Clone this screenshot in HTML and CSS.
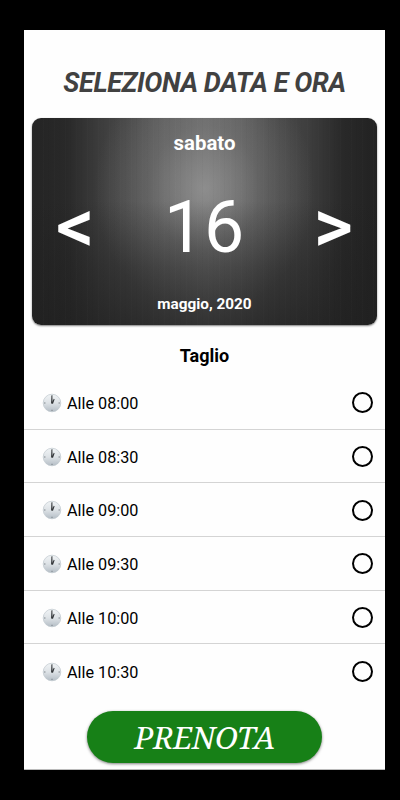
FILE: index.html
```
<!DOCTYPE html>
<html lang="it">
<head>
    <meta charset="UTF-8">
    <meta name="viewport" content="width=device-width, initial-scale=1.0">
    <title>Seleziona data e ora</title>
    <link rel="stylesheet" href="styles.css">
</head>
<body>
    <!-- Clock icon, shared by all the time slots -->
    <svg class="sprite" width="0" height="0">
        <defs>
            <linearGradient id="clockFace" x1="0" y1="0" x2="0" y2="1">
                <stop offset="0" stop-color="#f1f4f6"/>
                <stop offset="0.5" stop-color="#dde2e6"/>
                <stop offset="1" stop-color="#b4bdc5"/>
            </linearGradient>
        </defs>
        <symbol id="clock" viewBox="0 0 20 20">
            <circle cx="10" cy="10" r="8.8" fill="url(#clockFace)" stroke="#bfc7cd" stroke-width="0.7"/>
            <path d="M10 2.2v1M10 16.8v1M2.2 10h1.2M16.6 10h1.2" stroke="#6b7278" stroke-width="1"/>
            <path d="M9.4 2.8h.9l.4 7.7h-1.6z" fill="#303336"/>
            <path d="M9.6 10.2l2.2-4.4.8.5-1.6 4.4z" fill="#303336"/>
        </symbol>
    </svg>

    <main class="screen">
        <h1 class="title">SELEZIONA DATA E ORA</h1>

        <!-- Date Picker -->
        <section class="date-card">
            <p class="weekday">sabato</p>
            <div class="day-row">
                <button class="arrow">&lt;</button>
                <span class="day">16</span>
                <button class="arrow">&gt;</button>
            </div>
            <p class="month">maggio, 2020</p>
        </section>

        <h2 class="service">Taglio</h2>

        <!-- Time Slots -->
        <ul class="slots">
            <li class="slot"><svg class="clock"><use href="#clock"/></svg><span class="time">Alle 08:00</span><span class="radio"></span></li>
            <li class="slot"><svg class="clock"><use href="#clock"/></svg><span class="time">Alle 08:30</span><span class="radio"></span></li>
            <li class="slot"><svg class="clock"><use href="#clock"/></svg><span class="time">Alle 09:00</span><span class="radio"></span></li>
            <li class="slot"><svg class="clock"><use href="#clock"/></svg><span class="time">Alle 09:30</span><span class="radio"></span></li>
            <li class="slot"><svg class="clock"><use href="#clock"/></svg><span class="time">Alle 10:00</span><span class="radio"></span></li>
            <li class="slot"><svg class="clock"><use href="#clock"/></svg><span class="time">Alle 10:30</span><span class="radio"></span></li>
        </ul>

        <button class="book">PRENOTA</button>
    </main>
</body>
</html>
```
FILE: styles.css
```
/* General Styling */
* {
    box-sizing: border-box;
}

body {
    margin: 0;
    height: 100vh;
    padding: 30px 15px 30px 24px;
    background: #000;
    color: #000;
    font-family: Roboto, sans-serif;
}

h1, h2, p, ul {
    margin: 0;
    padding: 0;
}

button {
    border: none;
    padding: 0;
    background: none;
    color: #fff;
    cursor: pointer;
}

.sprite {
    display: block;
}

.screen {
    display: flex;
    flex-direction: column;
    height: 740px;
    overflow: hidden;
    background: #fefefe;
    border-bottom: 1px solid #bbb;
}

/* Header */
.title {
    height: 88px;
    padding-top: 17px;
    line-height: 72px;
    text-align: center;
    font-size: 27px;
    font-weight: 700;
    font-style: italic;
    letter-spacing: -0.38px;
    color: #414141;
    white-space: nowrap;
}

/* Date Picker */
.date-card {
    display: flex;
    flex-direction: column;
    height: 207px;
    margin: 0 8px;
    border-radius: 9px;
    color: #fff;
    text-align: center;
    background:
        repeating-linear-gradient(90deg, rgba(255, 255, 255, 0.012) 0 1px, transparent 1px 5px, rgba(0, 0, 0, 0.02) 5px 6px, transparent 6px 11px),
        linear-gradient(180deg, transparent 40%, rgba(32, 32, 32, 0.45) 72%, rgba(32, 32, 32, 0.75) 100%),
        radial-gradient(ellipse 110px 125px at 50% 34%, rgba(160, 160, 160, 0.65), rgba(130, 130, 130, 0.35) 50%, transparent),
        linear-gradient(90deg, #242424 0%, #292929 10%, #3d3d3d 20%, #494949 28%, #5c5c5c 38%, #6a6a6a 50%, #5e5e5e 60%, #4b4b4b 70%, #3e3e3e 80%, #292929 90%, #222 100%);
    box-shadow: 0 1px 2px rgba(0, 0, 0, 0.5);
}

.weekday {
    padding-top: 13px;
    font-size: 20.4px;
    line-height: 24px;
    font-weight: 700;
}

.day-row {
    display: flex;
    align-items: center;
    justify-content: space-between;
    height: 139px;
    padding: 0 24px;
}

.arrow {
    padding-top: 3px;
    font-family: Roboto, sans-serif;
    font-size: 76px;
    line-height: 90px;
    font-weight: 500;
}

.day {
    padding-top: 6px;
    font-size: 71.5px;
    line-height: 90px;
}

.month {
    font-size: 15.3px;
    line-height: 21px;
    font-weight: 700;
}

.service {
    height: 51px;
    padding-top: 20px;
    text-align: center;
    font-size: 18px;
    line-height: 22px;
    font-weight: 700;
}

/* Time Slots */
.slots {
    list-style: none;
}

.slot {
    display: flex;
    align-items: center;
    height: 53.7px;
    padding: 1px 12px 0 18px;
    border-bottom: 1px solid #d4d4d4;
}

.slot:last-child {
    border-bottom: none;
}

.clock {
    width: 20px;
    height: 20px;
}

.time {
    flex: 1;
    margin-left: 5px;
    padding-top: 1px;
    font-size: 16.2px;
}

.radio {
    width: 21px;
    height: 21px;
    border: 2px solid #000;
    border-radius: 50%;
}

/* Book Button */
.book {
    align-self: center;
    width: 235px;
    height: 52px;
    flex: none;
    margin-top: 13px;
    border-radius: 26px;
    background: #178017;
    box-shadow: 0 1px 3px rgba(0, 0, 0, 0.5);
    font-family: "Noto Serif", "Liberation Serif", serif;
    font-size: 31px;
    font-style: italic;
    letter-spacing: -0.5px;
}
```
